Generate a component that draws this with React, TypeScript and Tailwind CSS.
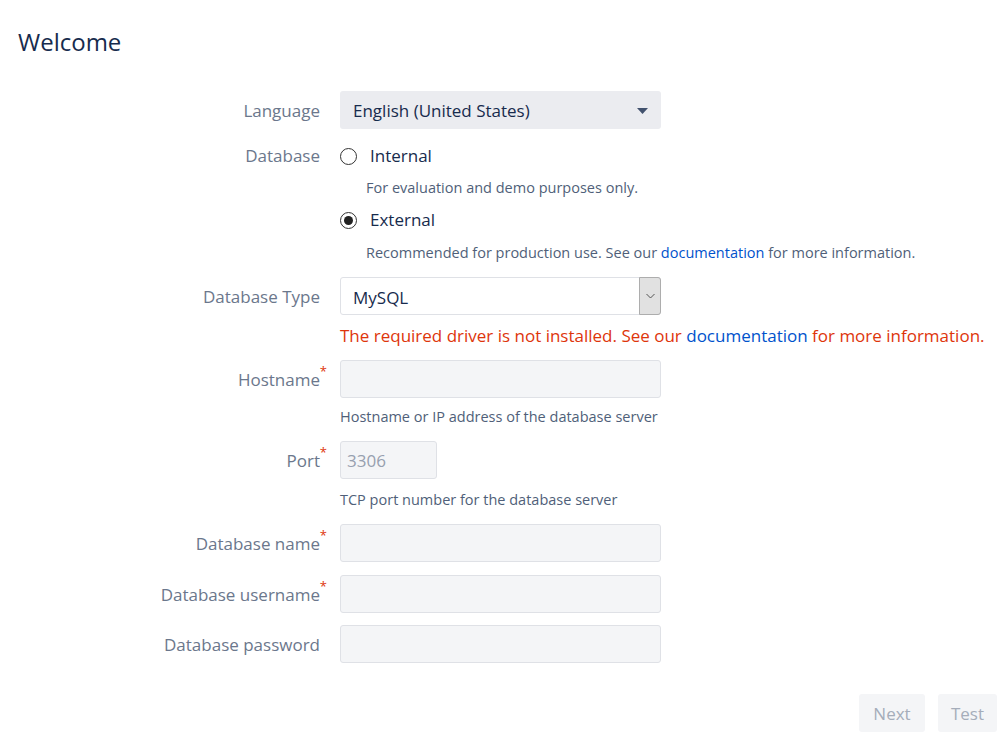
import React from "react";

const font = { fontFamily: '"Open Sans", "Noto Sans", sans-serif' };

function Label({ text, required }: { text: string; required?: boolean }) {
  return (
    <div className="w-[320px] h-[38px] shrink-0 text-right text-[#6b778c] text-[17px] leading-[40px]">
      <span className="relative">
        {text}
        {required && (
          <span className="absolute -right-[7px] -top-[3px] text-[#de350b] text-[13px] leading-none">*</span>
        )}
      </span>
    </div>
  );
}

function TextInput({ w = "w-[321px]", placeholder }: { w?: string; placeholder?: string }) {
  return (
    <div
      className={`${w} h-[38px] rounded-[3px] border border-[#dfe1e6] bg-[#f4f5f7] px-[6px] pt-[1px] flex items-center text-[17px] text-[#97a0af]`}
    >
      {placeholder}
    </div>
  );
}

function Radio({ checked, label }: { checked?: boolean; label: string }) {
  return (
    <div className="h-[30px] flex items-center">
      <div className="w-[17px] h-[17px] rounded-full border border-[#333] bg-white flex items-center justify-center">
        {checked && <div className="w-[9px] h-[9px] rounded-full bg-[#222]" />}
      </div>
      <span className="ml-[13px] text-[17px] text-[#172b4d]">{label}</span>
    </div>
  );
}

export default function App() {
  return (
    <div className="w-[999px] h-[750px] bg-white relative" style={font}>
      <div className="pt-[26px] pl-[18px] h-[58px] text-[24px] leading-[32px] text-[#172b4d]">Welcome</div>
      <div className="mt-[33px] flex flex-col">
        {/* Language */}
        <div className="flex gap-[20px]">
          <Label text="Language" />
          <div className="w-[321px] h-[38px] rounded-[3px] bg-[#ebecf0] flex items-center justify-between pl-[13px] pr-[13px] pt-[1px] text-[17px] text-[#172b4d]">
            <span>English (United States)</span>
            <svg width="11" height="6" viewBox="0 0 11 6">
              <path d="M0 0 L11 0 L5.5 6 Z" fill="#42526e" />
            </svg>
          </div>
        </div>
        {/* Database */}
        <div className="mt-[12px] flex gap-[20px]">
          <div className="w-[320px] shrink-0 text-right text-[#6b778c] text-[17px] leading-[30px]">Database</div>
          <div className="flex flex-col">
            <Radio label="Internal" />
            <div className="mt-[5px] h-[24px] pl-[26px] text-[14.5px] leading-[24px] text-[#505f79]">
              For evaluation and demo purposes only.
            </div>
            <div className="mt-[5px]">
              <Radio checked label="External" />
            </div>
            <div className="mt-[6px] h-[24px] pl-[26px] text-[14.5px] leading-[24px] text-[#505f79]">
              Recommended for production use. See our <span className="text-[#0052cc]">documentation</span> for more
              information.
            </div>
          </div>
        </div>
        {/* Database Type */}
        <div className="mt-[12px] flex gap-[20px]">
          <Label text="Database Type" />
          <div className="flex flex-col">
            <div className="w-[321px] h-[38px] rounded-[3px] border border-[#dfe1e6] bg-white flex items-stretch">
              <div className="flex-1 pl-[12px] pt-[3px] flex items-center text-[17px] text-[#172b4d]">MySQL</div>
              <div className="w-[22px] bg-[#e1e1e1] border border-[#adadad] rounded-r-[3px] -my-px -mr-px flex items-center justify-center">
                <svg width="9" height="6" viewBox="0 0 9 6">
                  <path d="M0.5 1 L4.5 5 L8.5 1" fill="none" stroke="#555" strokeWidth="1" />
                </svg>
              </div>
            </div>
          </div>
        </div>
        <div className="mt-[9px] flex gap-[20px]">
          <div className="w-[320px] shrink-0" />
          <div className="h-[24px] leading-[24px] text-[17px] text-[#de350b] whitespace-nowrap">
            The required driver is not installed. See our <span className="text-[#0052cc]">documentation</span> for
            more information.
          </div>
        </div>
        {/* Hostname */}
        <div className="mt-[12px] flex gap-[20px]">
          <Label text="Hostname" required />
          <TextInput />
        </div>
        <div className="mt-[7px] flex gap-[20px]">
          <div className="w-[320px] shrink-0" />
          <div className="h-[24px] leading-[24px] text-[14.5px] text-[#505f79]">
            Hostname or IP address of the database server
          </div>
        </div>
        {/* Port */}
        <div className="mt-[12px] flex gap-[20px]">
          <Label text="Port" required />
          <TextInput w="w-[97px]" placeholder="3306" />
        </div>
        <div className="mt-[9px] flex gap-[20px]">
          <div className="w-[320px] shrink-0" />
          <div className="h-[24px] leading-[24px] text-[14.5px] text-[#505f79]">
            TCP port number for the database server
          </div>
        </div>
        {/* DB name */}
        <div className="mt-[12px] flex gap-[20px]">
          <Label text="Database name" required />
          <TextInput />
        </div>
        <div className="mt-[13px] flex gap-[20px]">
          <Label text="Database username" required />
          <TextInput />
        </div>
        <div className="mt-[12px] flex gap-[20px]">
          <Label text="Database password" />
          <TextInput />
        </div>
        {/* Buttons */}
        <div className="mt-[31px] flex justify-end gap-[13px] pr-[2px]">
          <div className="w-[66px] h-[38px] rounded-[3px] bg-[#f4f5f7] flex items-center justify-center pt-[2px] text-[17px] text-[#a5adba]">
            Next
          </div>
          <div className="w-[59px] h-[38px] rounded-[3px] bg-[#f4f5f7] flex items-center justify-center pt-[2px] text-[17px] text-[#a5adba]">
            Test
          </div>
        </div>
      </div>
    </div>
  );
}
